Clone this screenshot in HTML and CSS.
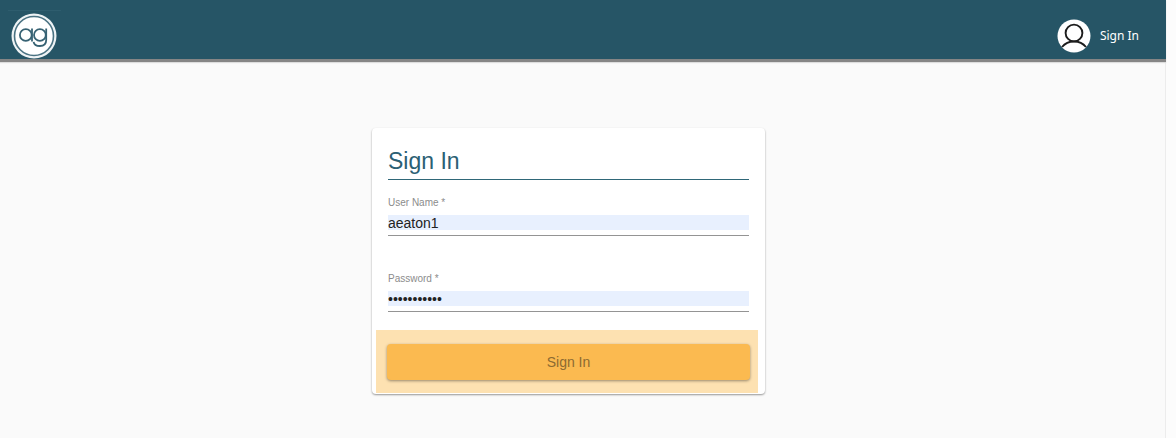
FILE: index.html
```html
<!DOCTYPE html>
<html lang="en">
<head>
    <meta charset="UTF-8">
    <meta name="viewport" content="width=device-width, initial-scale=1.0">
    <title>Sign In</title>
    <link rel="stylesheet" href="styles.css">
</head>
<body>
    <div class="page">
        <header class="topbar">
            <a class="logo" href="#" aria-label="Home">
                <svg width="46" height="46" viewBox="0 0 46 46" fill="none">
                    <circle cx="23" cy="23" r="22.5" fill="#eef3f5"/>
                    <circle cx="23" cy="23" r="19.5" fill="#fff" stroke="#4a7282" stroke-width="1.6"/>
                    <g stroke="#376273" stroke-width="1.8">
                        <circle cx="14.8" cy="22" r="5.9"/>
                        <path d="M21 15.600v12.800"/>
                        <circle cx="28.900" cy="22" r="5.900"/>
                        <path d="M35.200 15.600v11.400c0 4-2.600 6-6.300 6s-5.900-1.700-6.300-4.200"/>
                    </g>
                </svg>
            </a>
            <a class="account" href="#">
                <svg width="34" height="34" viewBox="0 0 34 34" fill="none">
                    <circle cx="17" cy="17" r="16.500" fill="#fff"/>
                    <g stroke="#1c1c1c" stroke-width="1.900">
                        <circle cx="17" cy="14" r="8.400"/>
                        <path d="M5 28c3-3.700 7-5.500 12-5.500s9 1.800 12 5.500"/>
                    </g>
                </svg>
                <span>Sign In</span>
            </a>
        </header>

        <main class="content">
            <form class="card">
                <h1>Sign In</h1>

                <div class="field">
                    <label for="username">User Name *</label>
                    <input type="text" id="username" value="aeaton1">
                </div>

                <div class="field">
                    <label for="password">Password *</label>
                    <input type="password" id="password" value="password123">
                </div>

                <div class="actions">
                    <button type="submit">Sign In</button>
                </div>
            </form>
        </main>
    </div>
</body>
</html>
```

FILE: styles.css
```css
*{
    box-sizing: border-box;
}
body{
    margin: 0;
    background-color: #fcfcfc;
    font-family: "Liberation Sans", Arial, sans-serif;
}
.page{
    min-height: 100vh;
    margin-right: 10px;
    background-color: #fafafa;
    border-right: 1px solid #ececec;
}

/* top bar */
.topbar{
    display: flex;
    align-items: center;
    justify-content: space-between;
    height: 62px;
    margin-right: -1px;
    padding: 10px 27px 0 8px;
    background-color: #265566;
    border-bottom: 3px solid #858585;
    box-shadow: 0 1px 1px #ddd;
}
.topbar a{
    color: #fff;
    text-decoration: none;
}
.topbar svg{
    display: block;
}
.logo{
    padding: 2px 4px 0 3px;
    border-top: 1px solid #2e5d6e;
}
.account{
    display: flex;
    align-items: center;
    gap: 9px;
    padding-top: 2px;
    font-family: "Noto Sans", "Open Sans", sans-serif;
    font-size: 12px;
}

/* sign in card */
.content{
    display: grid;
    grid-template-columns: 372fr 393fr 400fr;
    padding: 66px 0 32px;
}
.card{
    grid-column: 2;
    padding: 16px 16px 1px;
    background-color: #fff;
    border-radius: 4px;
    box-shadow: 0 1px 2px rgba(0, 0, 0, 0.4);
}
.card h1{
    margin: 0 0 16px;
    border-bottom: 1px solid #2f6778;
    color: #2b6074;
    font-size: 23px;
    font-weight: normal;
    line-height: 35px;
}
.field{
    margin-bottom: 36px;
    padding-bottom: 5px;
    border-bottom: 1px solid #949494;
}
.field label{
    display: block;
    margin-bottom: 5px;
    color: #8c8c8c;
    font-size: 10px;
    line-height: 14px;
}
.field input{
    display: block;
    width: 100%;
    height: 15px;
    padding: 0;
    border: none;
    outline: none;
    background-color: #e8f0fe;
    color: #222;
    font-family: inherit;
    font-size: 14px;
}
.actions{
    margin: -18px -9px 0 -12px;
    padding: 14px 8px 13px 11px;
    background-color: #fde1b1;
}
.actions button{
    display: block;
    width: 100%;
    height: 36px;
    border: none;
    border-radius: 4px;
    background-color: #fbba50;
    box-shadow: 0 1px 3px rgba(0, 0, 0, 0.4);
    color: #8c6a32;
    font-family: inherit;
    font-size: 14px;
    cursor: pointer;
}
```
